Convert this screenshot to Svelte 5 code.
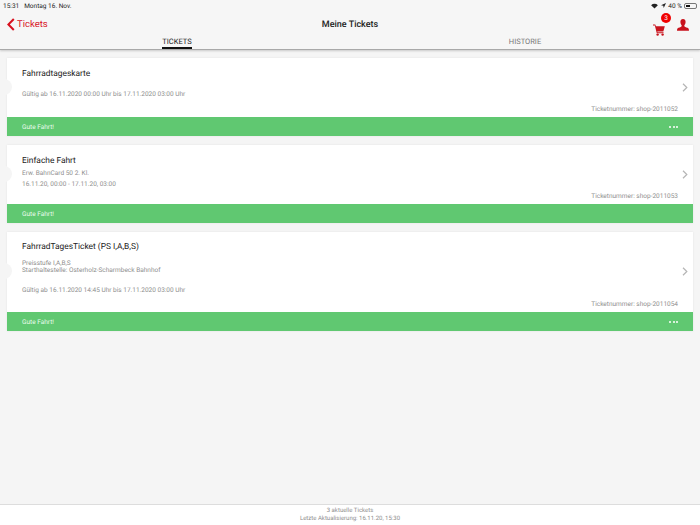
<script>
  // Ticket list: white body with a notch + chevron, green status bar underneath.
  const tickets = [
    {
      title: 'Fahrradtageskarte',
      lines: [],
      valid: 'Gültig ab 16.11.2020 00:00 Uhr bis 17.11.2020 03:00 Uhr',
      nr: 'shop-2011052',
      more: true,
      kind: 'a'
    },
    {
      title: 'Einfache Fahrt',
      lines: ['Erw. BahnCard 50 2. Kl.'],
      valid: '16.11.20, 00:00 - 17.11.20, 03:00',
      nr: 'shop-2011053',
      more: false,
      kind: 'b'
    },
    {
      title: 'FahrradTagesTicket (PS I,A,B,S)',
      lines: ['Preisstufe I,A,B,S', 'Starthaltestelle: Osterholz-Scharmbeck Bahnhof'],
      valid: 'Gültig ab 16.11.2020 14:45 Uhr bis 17.11.2020 03:00 Uhr',
      nr: 'shop-2011054',
      more: true,
      kind: 'c'
    }
  ];
</script>

<div class="page">
  <header>
    <div class="status">
      <span>15:31</span>
      <span class="date">Montag 16. Nov.</span>
      <span class="status-right">
        <svg class="wifi" width="7" height="6" viewBox="0 0 11 9"><path d="M5.5 8.6 L0.2 3.2 A7.6 7.6 0 0 1 10.8 3.2 Z" fill="#222" /></svg>
        <svg width="5" height="5" viewBox="0 0 8 8"><path d="M8 0 L0 3.7 L3.7 4.3 L4.3 8 Z" fill="#222" /></svg>
        <span>40 %</span>
        <span class="battery"><i></i></span>
      </span>
    </div>
    <div class="nav">
      <a class="back" href="#top">
        <svg width="8" height="13" viewBox="0 0 8 13"><path d="M6.8 1 L1.4 6.5 L6.8 12" fill="none" stroke="#d8121f" stroke-width="2" /></svg>
        Tickets
      </a>
      <div class="heading">Meine Tickets</div>
      <div class="actions">
        <span class="cart">
          <svg width="12" height="12" viewBox="0 0 13 13"><path d="M0 .6 H2.4 L3.2 2.4 H12.8 L11.2 8 H4.6 L4.9 9 H11.4 V9.9 H4.1 L2 1.5 H0 Z" fill="#c8121c" /><circle cx="5" cy="11.5" r="1.3" fill="#c8121c" /><circle cx="10.4" cy="11.5" r="1.3" fill="#c8121c" /></svg>
          <span class="badge">3</span>
        </span>
        <svg class="person" width="12" height="12" viewBox="0 0 13 13"><path d="M6.5 0 C8.6 0 9.5 1.6 9.3 3.6 C9.1 5.4 8.3 6.6 7.8 7.2 C8 8.2 9.6 8.8 11.4 9.5 C12.6 10 13 10.9 13 12.8 H0 C0 10.9 .4 10 1.6 9.5 C3.4 8.8 5 8.2 5.2 7.2 C4.7 6.6 3.9 5.4 3.7 3.6 C3.5 1.6 4.4 0 6.5 0 Z" fill="#c8121c" /></svg>
      </div>
    </div>
    <div class="tabs">
      <div class="tab"><span class="active">TICKETS</span></div>
      <div class="tab"><span>HISTORIE</span></div>
    </div>
  </header>

  <main>
    {#each tickets as t (t.nr)}
      <article class="ticket {t.kind}">
        <div class="body">
          <h2>{t.title}</h2>
          {#if t.lines.length}
            <div class="lines">
              {#each t.lines as line}<div>{line}</div>{/each}
            </div>
          {/if}
          <div class="valid">{t.valid}</div>
          <div class="nr">Ticketnummer: {t.nr}</div>
          <span class="notch"></span>
          <svg class="chev" width="6" height="9" viewBox="0 0 6 9"><path d="M1 .8 L4.8 4.5 L1 8.2" fill="none" stroke="#b5b5b5" stroke-width="1.2" /></svg>
        </div>
        <div class="bar">
          <span>Gute Fahrt!</span>
          {#if t.more}<span class="dots"><i></i><i></i><i></i></span>{/if}
        </div>
      </article>
    {/each}
  </main>

  <footer>
    <div>3 aktuelle Tickets</div>
    <div>Letzte Aktualisierung: 16.11.20, 15:30</div>
  </footer>
</div>

<style>
  :global(body) {
    margin: 0;
  }
  .page {
    width: 700px;
    height: 525px;
    display: flex;
    flex-direction: column;
    background: #f5f5f5;
    font-family: Roboto, "Liberation Sans", sans-serif;
    text-rendering: geometricPrecision;
    overflow: hidden;
    opacity: 0.999;
  }
  header {
    height: 50px;
    flex: none;
    box-sizing: border-box;
    background: #f6f6f6;
    border-bottom: 1px solid #a9a9a9;
    box-shadow: 0 1px 2px rgba(0, 0, 0, 0.18);
    position: relative;
  }
  .status {
    height: 11px;
    padding: 0 3px;
    display: flex;
    align-items: center;
    font-size: 6.5px;
    color: #222;
  }
  .date {
    margin-left: 5px;
  }
  .status-right {
    margin-left: auto;
    display: flex;
    align-items: center;
    gap: 2px;
  }
  .wifi {
    margin-right: 1px;
  }
  .battery {
    width: 13px;
    height: 6px;
    border: 1px solid #777;
    border-radius: 2px;
    padding: 1px;
    box-sizing: border-box;
    display: flex;
  }
  .battery i {
    width: 40%;
    background: #111;
  }
  .nav {
    height: 24px;
    box-sizing: border-box;
    padding: 2px 11px 0;
    display: grid;
    grid-template-columns: 1fr auto 1fr;
    align-items: center;
  }
  .back {
    display: flex;
    align-items: center;
    gap: 2px;
    margin-left: -4px;
    color: #d8121f;
    font-size: 9.5px;
    text-decoration: none;
  }
  .heading {
    font-size: 9px;
    font-weight: 500;
    color: #222;
  }
  .actions {
    display: flex;
    justify-content: flex-end;
    align-items: center;
    gap: 12px;
  }
  .cart {
    position: relative;
    display: flex;
    margin-top: 11px;
  }
  .person {
    margin-top: 1px;
  }
  .badge {
    position: absolute;
    top: -11px;
    left: 8px;
    width: 10px;
    height: 10px;
    border-radius: 50%;
    background: #f00000;
    color: #fff;
    font-size: 6.5px;
    line-height: 10px;
    text-align: center;
  }
  .tabs {
    display: grid;
    grid-template-columns: 1fr 1fr;
    height: 14px;
    padding: 0 1px 0 3px;
    font-size: 7.5px;
    color: #777;
    text-align: center;
  }
  .tab span {
    display: inline-block;
    height: 14px;
    line-height: 13px;
    box-sizing: border-box;
  }
  .tab .active {
    color: #222;
    border-bottom: 2px solid #111;
  }
  main {
    flex: 1;
    display: flex;
    flex-direction: column;
    gap: 9px;
    padding: 8px 7px 0;
  }
  .ticket {
    background: #fff;
    box-shadow: 0 0 2px rgba(0, 0, 0, 0.08);
  }
  .body {
    position: relative;
    box-sizing: border-box;
    padding: 10px 15px 0;
    height: 59px;
    font-size: 6.5px;
    color: #8e8e8e;
  }
  .c .body {
    height: 80px;
    padding-top: 9px;
  }
  h2 {
    margin: 0;
    font-size: 8.4px;
    line-height: 12px;
    font-weight: 400;
    color: #222;
  }
  .lines {
    margin-top: 3px;
    line-height: 7px;
  }
  .valid {
    margin-top: 10px;
    line-height: 8px;
  }
  .b .valid {
    margin-top: 3px;
  }
  .c .valid {
    margin-top: 12px;
  }
  .c .lines {
    margin-top: 7px;
  }
  .nr {
    position: absolute;
    right: 15px;
    bottom: 3px;
    line-height: 9px;
  }
  .notch {
    position: absolute;
    left: -11px;
    top: 21px;
    width: 16px;
    height: 16px;
    border-radius: 50%;
    background: #f5f5f5;
  }
  .c .notch {
    top: 31px;
  }
  .chev {
    position: absolute;
    right: 5px;
    top: 25px;
  }
  .c .chev {
    top: 35px;
  }
  .bar {
    height: 19px;
    background: #60c871;
    color: #eafbee;
    font-size: 6.5px;
    display: flex;
    align-items: center;
    justify-content: space-between;
    padding: 0 15px;
  }
  .dots {
    display: flex;
    gap: 1.5px;
  }
  .dots i {
    width: 2px;
    height: 2px;
    border-radius: 50%;
    background: #fff;
  }
  footer {
    height: 21px;
    flex: none;
    box-sizing: border-box;
    background: #fff;
    border-top: 1px solid #ddd;
    padding-top: 2px;
    font-size: 6px;
    line-height: 8px;
    color: #8e8e8e;
    text-align: center;
  }
</style>
